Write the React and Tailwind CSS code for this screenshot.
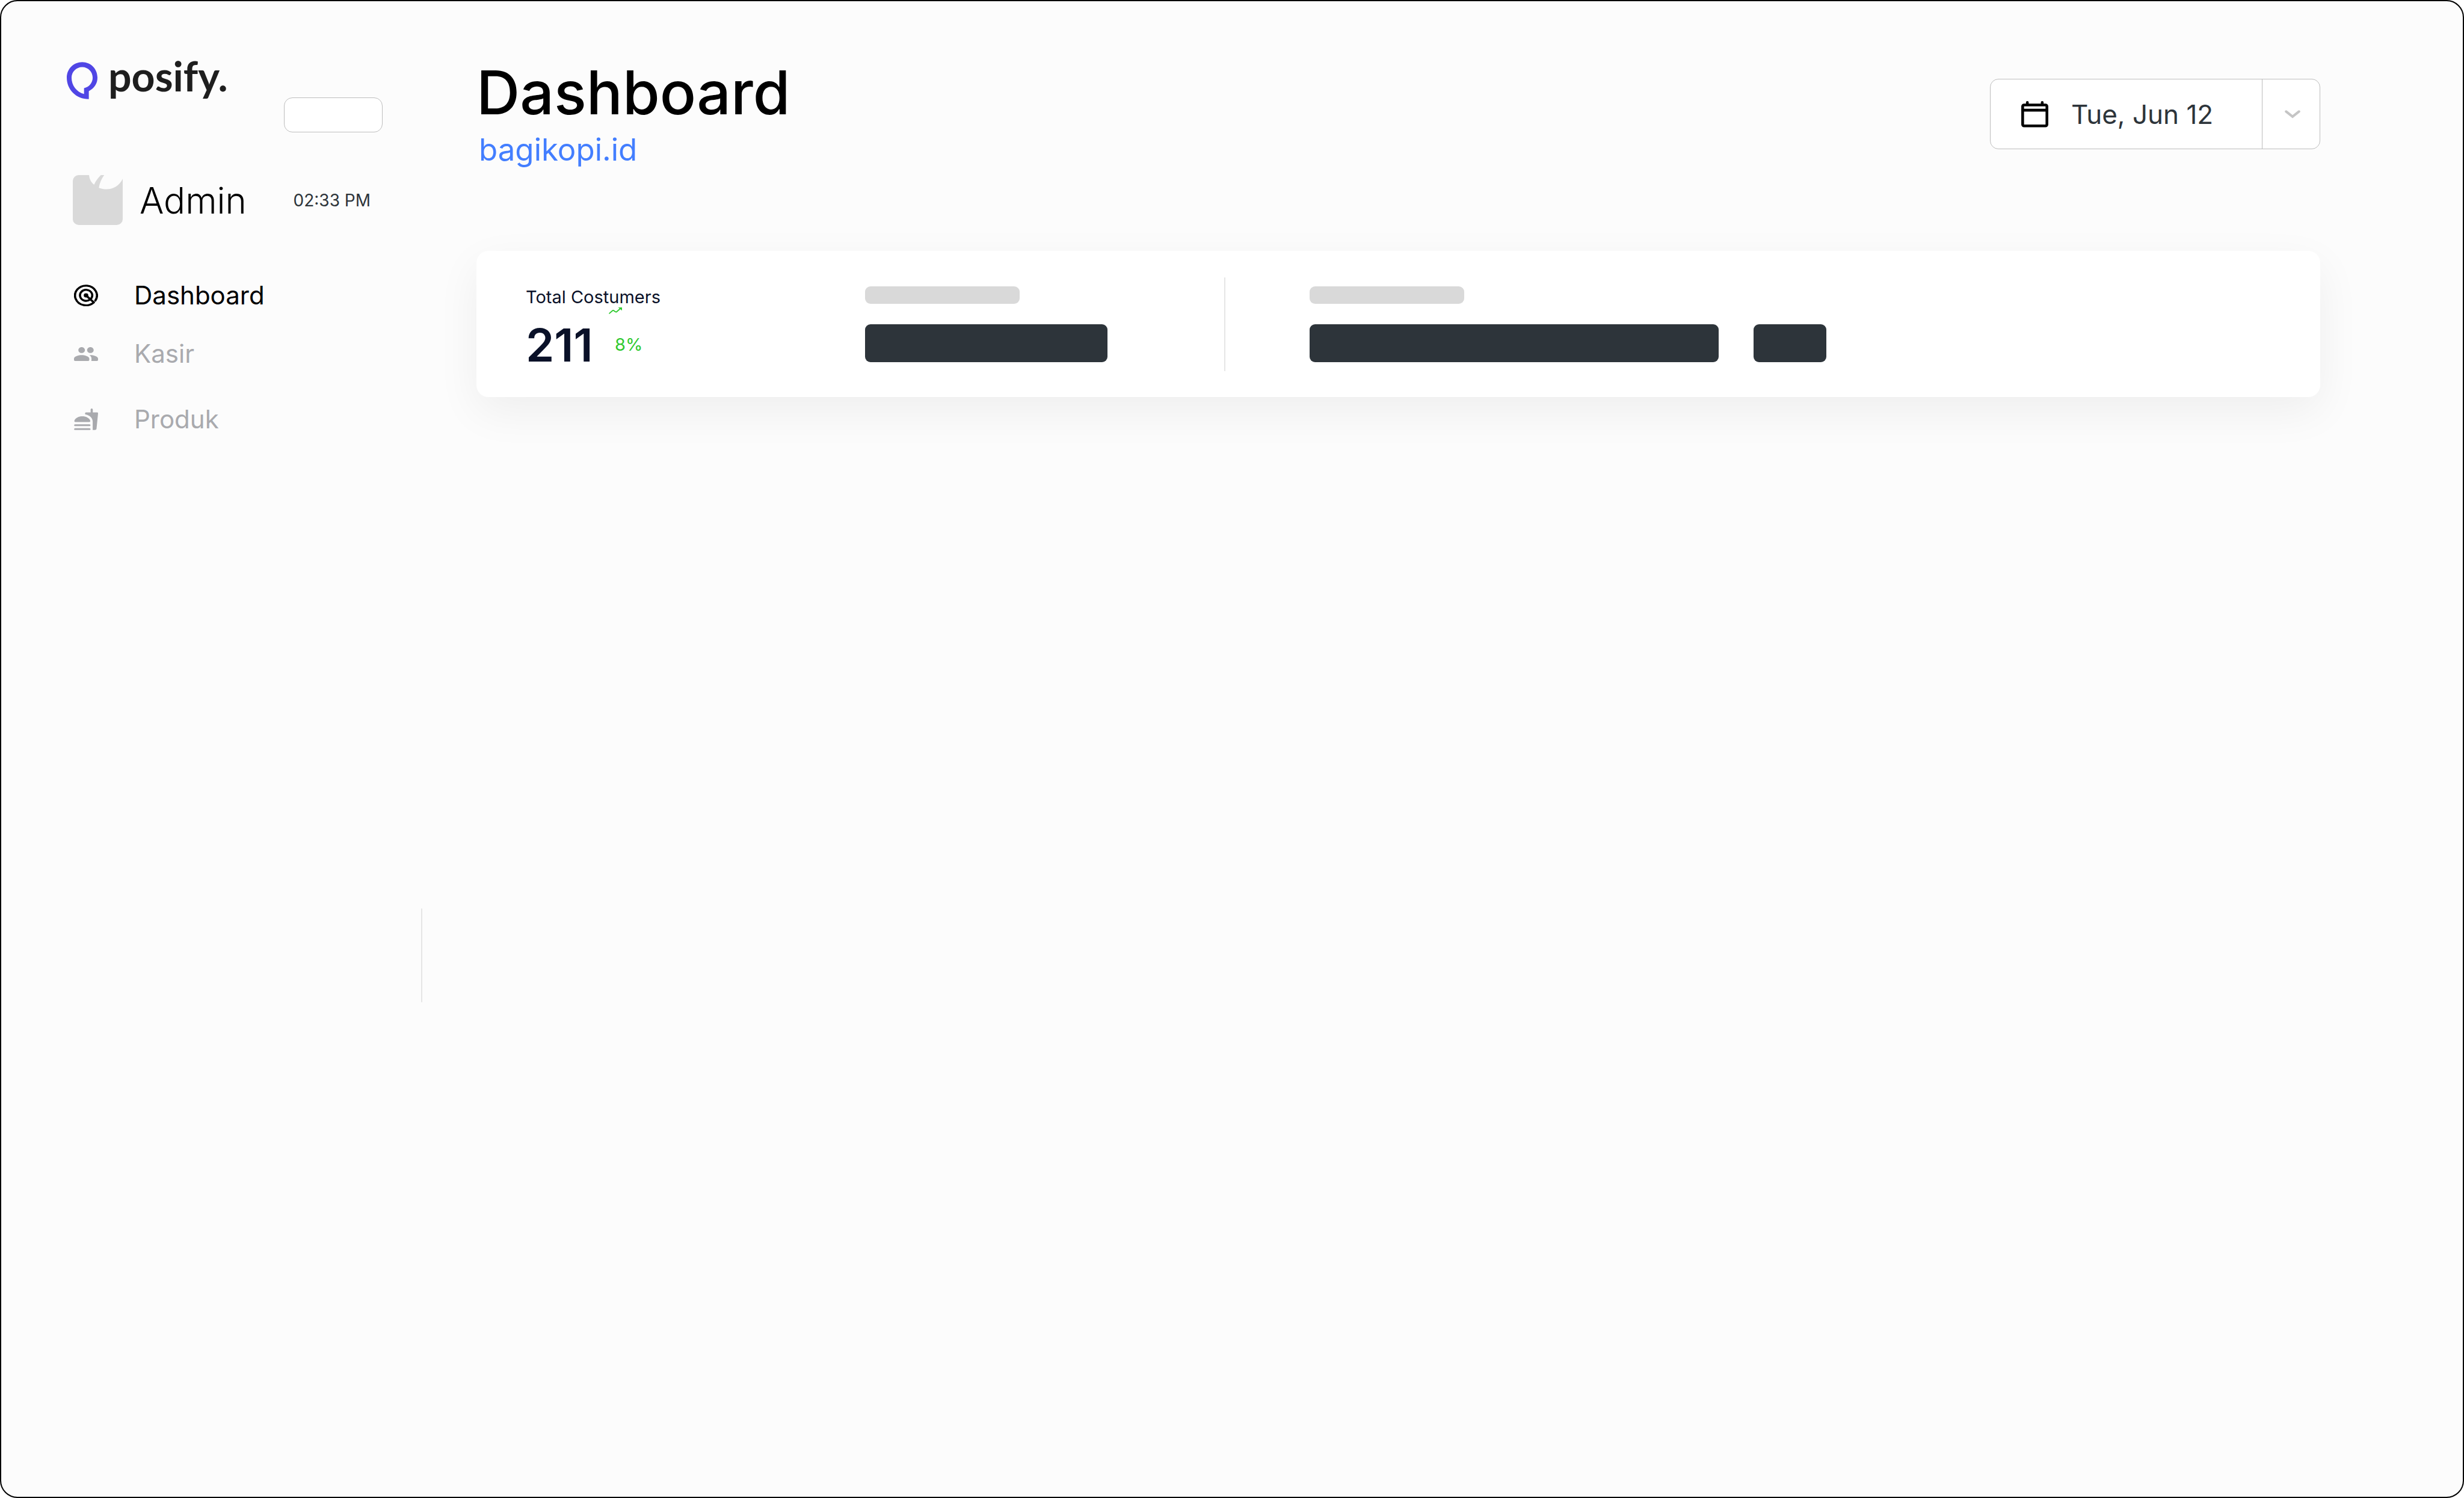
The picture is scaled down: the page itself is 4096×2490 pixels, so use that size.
import React from "react";

const ink = "text-[#2d343a]";

function LogoMark() {
  return (
    <svg viewBox="0 0 167 202" className="h-[62px] w-[51px] text-[#5046e5]" fill="currentColor" fillRule="evenodd" aria-hidden="true">
      <path d="M84 0C131 0 167 37 167 85c0 33-18 59-47 73v44C50 202 0 150 0 85 0 37 37 0 84 0ZM84 27C52 27 26 53 26 85c0 42 27 79 68 89v-32c28-5 47-29 47-57 0-32-25-58-57-58Z" />
    </svg>
  );
}

function Avatar() {
  return (
    <svg viewBox="0 0 270 270" className="size-[83px] text-[#d9d9d9]" fill="currentColor" aria-hidden="true">
      <path d="M32 0H88C90 23 100 40 115 52 125 31 137 14 152 0H170C155 20 145 43 141 69 195 88 245 70 270 20V238a32 32 0 0 1-32 32H32a32 32 0 0 1-32-32V32A32 32 0 0 1 32 0Z" />
    </svg>
  );
}

function RadarIcon() {
  return (
    <svg viewBox="1 1 22 22" preserveAspectRatio="none" className="h-9 w-10" fill="none" stroke="currentColor" strokeWidth="2" strokeLinecap="round" aria-hidden="true">
      <path d="M19.1 19.1A10 10 0 1 1 20.5 17.3" />
      <path d="M15.6 16.3A5.6 5.6 0 1 1 16.9 14.8" />
      <path d="M12 12L19.1 19.1" />
      <circle cx="12" cy="12" r="2.1" fill="currentColor" stroke="none" />
    </svg>
  );
}

function PeopleIcon() {
  return (
    <svg viewBox="1 5 22 14" preserveAspectRatio="none" className="h-[23px] w-10" fill="currentColor" aria-hidden="true">
      <path d="M16 11c1.66 0 2.99-1.34 2.99-3S17.66 5 16 5s-3 1.34-3 3 1.34 3 3 3zm-8 0c1.66 0 2.99-1.34 2.99-3S9.66 5 8 5 5 6.34 5 8s1.34 3 3 3zm0 2c-2.33 0-7 1.17-7 3.5V18c0 .55.45 1 1 1h12c.55 0 1-.45 1-1v-1.5c0-2.33-4.67-3.5-7-3.5zm8 0c-.29 0-.62.02-.97.05.02.01.03.03.04.04 1.14.83 1.93 1.94 1.93 3.41V18c0 .35-.07.69-.18 1H22c.55 0 1-.45 1-1v-1.5c0-2.33-4.67-3.5-7-3.5z" />
    </svg>
  );
}

function FoodIcon() {
  return (
    <svg viewBox="1 1 22 22" preserveAspectRatio="none" className="h-9 w-10" fill="currentColor" aria-hidden="true">
      <path d="M2.2 14.7C1.5 14.7 1.2 14.2 1.3 13.6 2.2 10.4 5.3 8.9 8.6 8.9s6.4 1.5 7.3 4.7c.1.6-.2 1.1-.9 1.1Z" />
      <rect x="1.1" y="17" width="15" height="1.9" rx=".95" />
      <rect x="1.1" y="21" width="15" height="1.9" rx=".95" />
      <path d="M16.2 5V2a1 1 0 0 1 2 0v3h3.9c.6 0 1 .5.9 1.1l-1.4 15.4c-.1.8-.8 1.4-1.6 1.4h-1.9v-8.6c0-3.8-3-6.500-6.400-7.200-.5-.1-.6-.5-.6-.9 0-.8.5-1.2 1.100-1.200Z" />
    </svg>
  );
}

function TrendIcon() {
  return (
    <svg viewBox="0 0 24 12" className="h-[11px] w-[22px]" fill="none" stroke="currentColor" strokeWidth="2" strokeLinecap="round" strokeLinejoin="round" aria-hidden="true">
      <path d="M1.2 10.8L6.6 6Q8 4.9 9.4 6L11.6 7.7Q13.2 8.9 14.6 7.6L20.5 2.5" />
      <path d="M17 0H24V5.6Z" fill="currentColor" stroke="none" />
    </svg>
  );
}

function CalendarIcon() {
  return (
    <svg viewBox="0 0 49 48" className="h-11 w-[45px] text-black" fill="none" stroke="currentColor" strokeWidth="5" strokeLinecap="round" aria-hidden="true">
      <rect x="2.5" y="7" width="44" height="38" rx="2.5" />
      <path d="M2.5 16.5H46.5M11 2.5V6M38 2.5V6" />
    </svg>
  );
}

function ChevronIcon() {
  return (
    <svg viewBox="0 0 28 15" className="h-[14px] w-[26px] text-[#c5c5c5]" fill="none" stroke="currentColor" strokeWidth="4.5" strokeLinecap="round" aria-hidden="true">
      <path d="M2.5 2.5L14 11.7 25.5 2.5" />
    </svg>
  );
}

function NavItem({ icon, label, active, className }) {
  return (
    <li className={className}>
      <a
        href="#"
        aria-current={active ? "page" : undefined}
        className={`flex h-14 items-center ${active ? "text-black" : "text-[#a9aaae]"}`}
      >
        <span className="flex w-[100px] shrink-0 items-center">{icon}</span>
        <span className="text-[42px] leading-14">{label}</span>
      </a>
    </li>
  );
}

function Sidebar() {
  return (
    <aside className="w-[698px] shrink-0 pt-[92px] pr-16 pl-[109px]">
      <div className="flex items-start justify-between">
        <a href="#" className="flex h-20 items-center gap-[18px]">
          <LogoMark />
          <span className="pb-4 font-['Lato',sans-serif] text-[68px] leading-16 font-bold text-[#1e1e1e]">posify.</span>
        </a>
        <input
          aria-label="Search"
          className="mt-[68px] h-[58px] w-[164px] rounded-[14px] border border-[#bdbdbd] bg-white"
        />
      </div>
      <div className="mt-[71px] flex items-center pr-5 pl-[10px]">
        <Avatar />
        <span className="ml-7 text-[60px] leading-16 font-light text-black">Admin</span>
        <time className={`ml-auto text-[28px] leading-8 ${ink}`}>02:33 PM</time>
      </div>
      <nav className="mt-[89px] pl-3">
        <ul>
          <NavItem icon={<RadarIcon />} label="Dashboard" active />
          <NavItem icon={<PeopleIcon />} label="Kasir" className="mt-[41px]" />
          <NavItem icon={<FoodIcon />} label="Produk" className="mt-[53px]" />
        </ul>
      </nav>
    </aside>
  );
}

function DatePicker() {
  return (
    <div className="mt-[29px] flex h-[117px] w-[549px] rounded-[14px] border border-[#bdbdbd] bg-white">
      <button type="button" className={`flex flex-1 items-center gap-[38px] pl-[51px] text-[44px] whitespace-nowrap ${ink}`}>
        <CalendarIcon />
        Tue, Jun 12
      </button>
      <button type="button" aria-label="Choose date" className="flex w-24 items-center justify-center border-l border-[#bdbdbd] pl-1">
        <ChevronIcon />
      </button>
    </div>
  );
}

function StatsCard() {
  return (
    <section className="mt-[138px] flex h-[243px] rounded-[20px] bg-white shadow-[0_24px_72px_rgba(0,0,0,0.06)]">
      <div className="w-[646px] shrink-0 pt-[60px] pl-[82px] text-[#0a1128]">
        <h2 className="text-[29px] leading-[34px]">Total Costumers</h2>
        <div className="flex items-start">
          <p className="mt-[26px] w-[138px] text-[76px] leading-[72px] font-semibold">211</p>
          <div className="text-[#30ca30]">
            <TrendIcon />
            <p className="mt-[37px] ml-[10px] text-[29px] leading-7">8%</p>
          </div>
        </div>
      </div>
      <div className="w-[597px] shrink-0 pt-[59px]">
        <div className="h-[29px] w-[257px] rounded-[9px] bg-[#d9d9d9]" />
        <div className="mt-[34px] h-[63px] w-[403px] rounded-[9px] bg-[#2d343a]" />
      </div>
      <div className="h-[156px] w-[2px] shrink-0 self-center rounded-full bg-[#e5e5e5]" />
      <div className="pt-[59px] pl-[140px]">
        <div className="h-[29px] w-[257px] rounded-[9px] bg-[#d9d9d9]" />
        <div className="mt-[34px] flex gap-[58px]">
          <div className="h-[63px] w-[680px] rounded-[9px] bg-[#2d343a]" />
          <div className="h-[63px] w-[121px] rounded-[9px] bg-[#2d343a]" />
        </div>
      </div>
    </section>
  );
}

export default function App() {
  return (
    <div className="bg-white font-['Inter',sans-serif]">
      <div className="flex min-h-screen rounded-[29px] border-2 border-black bg-[#fcfcfc]">
        <Sidebar />
        <div className="mt-[1508px] h-[156px] w-[2px] shrink-0 rounded-full bg-[#e5e5e5]" />
        <main className="min-w-0 flex-1 pt-[100px] pr-[237px] pl-[90px]">
          <header className="flex items-start justify-between">
            <div>
              <h1 className="text-[100px] leading-[104px] font-medium text-black">Dashboard</h1>
              <a href="#" className="mt-[13px] block pl-1 text-[51px] leading-[60px] text-[#437eff]">bagikopi.id</a>
            </div>
            <DatePicker />
          </header>
          <StatsCard />
        </main>
      </div>
    </div>
  );
}
